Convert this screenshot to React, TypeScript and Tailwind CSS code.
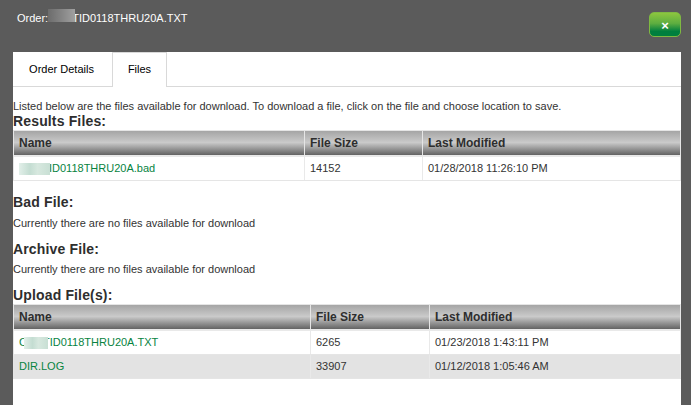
import type { ReactNode } from 'react';
import { useState } from 'react';
import clsx from 'clsx';

interface FileRow {
  name: string;
  hidden: string;
  prefix?: string;
  size: string;
  modified: string;
}

const resultFiles: FileRow[] = [
  { name: 'ID0118THRU20A.bad', hidden: 'w-[31px] -mr-px', size: '14152', modified: '01/28/2018 11:26:10 PM' },
];

const uploadFiles: FileRow[] = [
  {
    prefix: 'C',
    name: 'TID0118THRU20A.TXT',
    hidden: 'w-[24px] -ml-[3px] -mr-[5px]',
    size: '6265',
    modified: '01/23/2018 1:43:11 PM',
  },
  { name: 'DIR.LOG', hidden: '', size: '33907', modified: '01/12/2018 1:05:46 AM' },
];

function SectionTitle({ children, className }: { children: ReactNode; className?: string }) {
  return (
    <h3 className={clsx('h-[17px] text-[14px] leading-[17px] font-bold tracking-[0.15px] text-[#2e2e2e]', className)}>
      {children}
    </h3>
  );
}

function FileTable({ rows, columns }: { rows: FileRow[]; columns: string }) {
  return (
    <div className="border-t border-l border-[#e5e5e5]">
      <div
        className={clsx(
          'grid h-[26px] border-b-2 border-[#e9e9e9] bg-[linear-gradient(#a5a5a5,#cacaca_48%,#636363)] text-[12px] leading-[24px] font-bold text-[#2e2e2e]',
          columns
        )}
      >
        {['Name', 'File Size', 'Last Modified'].map((title) => (
          <div key={title} className="border-r border-[#e5e5e5] pl-[5px]">
            {title}
          </div>
        ))}
      </div>
      {rows.map((row, i) => (
        <div
          key={row.name}
          className={clsx(
            'grid h-[24px] border-b border-[#e5e5e5] leading-[23px]',
            columns,
            i % 2 === 1 && 'bg-[#e3e3e3]'
          )}
        >
          <div className="flex border-r border-[#e9e9e9] pl-[5px] text-[#08833f]">
            {row.prefix && <span>{row.prefix}</span>}
            {row.hidden && (
              <span
                className={clsx(
                  'z-10 mt-[6px] h-[12px] bg-[linear-gradient(90deg,#e2efe9,#c4ddd2_35%,#d7e8df_60%,#c8dfd4)] blur-[0.5px]',
                  row.hidden
                )}
              />
            )}
            <span>{row.name}</span>
          </div>
          <div className="border-r border-[#e9e9e9] pl-[5px]">{row.size}</div>
          <div className="border-r border-[#e9e9e9] pl-[5px]">{row.modified}</div>
        </div>
      ))}
    </div>
  );
}

export default function App() {
  const [tab, setTab] = useState('Files');

  return (
    <div className="flex h-[405px] w-[691px] flex-col overflow-hidden bg-[#5b5b5b] pr-[10px] pl-[13px] font-['Liberation_Sans',Arial,sans-serif] text-[11px] whitespace-nowrap text-[#333]">
      <header className="flex h-[52px] shrink-0 justify-between pl-[4px] text-white">
        <div className="flex pt-[10px] leading-[16px]">
          <span>Order:</span>
          <span className="z-10 -mt-px -mr-[3px] h-[13px] w-[27px] bg-[linear-gradient(90deg,#6c6c6c,#858585_50%,#a0a0a0)] blur-[0.5px]" />
          <span>TID0118THRU20A.TXT</span>
        </div>
        <button
          aria-label="Close"
          className="mt-[12px] flex h-[25px] w-[32px] items-center justify-center rounded-[5px] border border-[#7fb942] bg-[linear-gradient(#8cc63f,#5eae40_45%,#007f3e_80%)] pt-[2px] text-[13px] leading-none font-bold"
        >
          ×
        </button>
      </header>
      <main className="flex-1 bg-white">
        <nav className="flex h-[35px] border-b border-[#d9d9d9] text-black">
          {['Order Details', 'Files'].map((label) => (
            <button
              key={label}
              onClick={() => setTab(label)}
              className={clsx(
                'h-[35px] border border-b-0 pb-[2px]',
                label === 'Files' ? 'w-[55px]' : 'w-[99px] pr-[2px]',
                tab === label ? 'border-[#d9d9d9] bg-white' : 'border-transparent'
              )}
            >
              {label}
            </button>
          ))}
        </nav>
        <p className="mt-[12px] h-[14px] leading-[14px]">
          Listed below are the files available for download. To download a file, click on the file and choose location to save.
        </p>
        <SectionTitle>Results Files:</SectionTitle>
        <FileTable rows={resultFiles} columns="grid-cols-[291px_118px_258px]" />
        <SectionTitle className="mt-[13px]">Bad File:</SectionTitle>
        <p className="mt-[5px] h-[14px] leading-[14px]">Currently there are no files available for download</p>
        <SectionTitle className="mt-[11px]">Archive File:</SectionTitle>
        <p className="mt-[4px] h-[14px] leading-[14px]">Currently there are no files available for download</p>
        <SectionTitle className="mt-[11px]">Upload File(s):</SectionTitle>
        <FileTable rows={uploadFiles} columns="grid-cols-[297px_119px_251px]" />
      </main>
    </div>
  );
}
